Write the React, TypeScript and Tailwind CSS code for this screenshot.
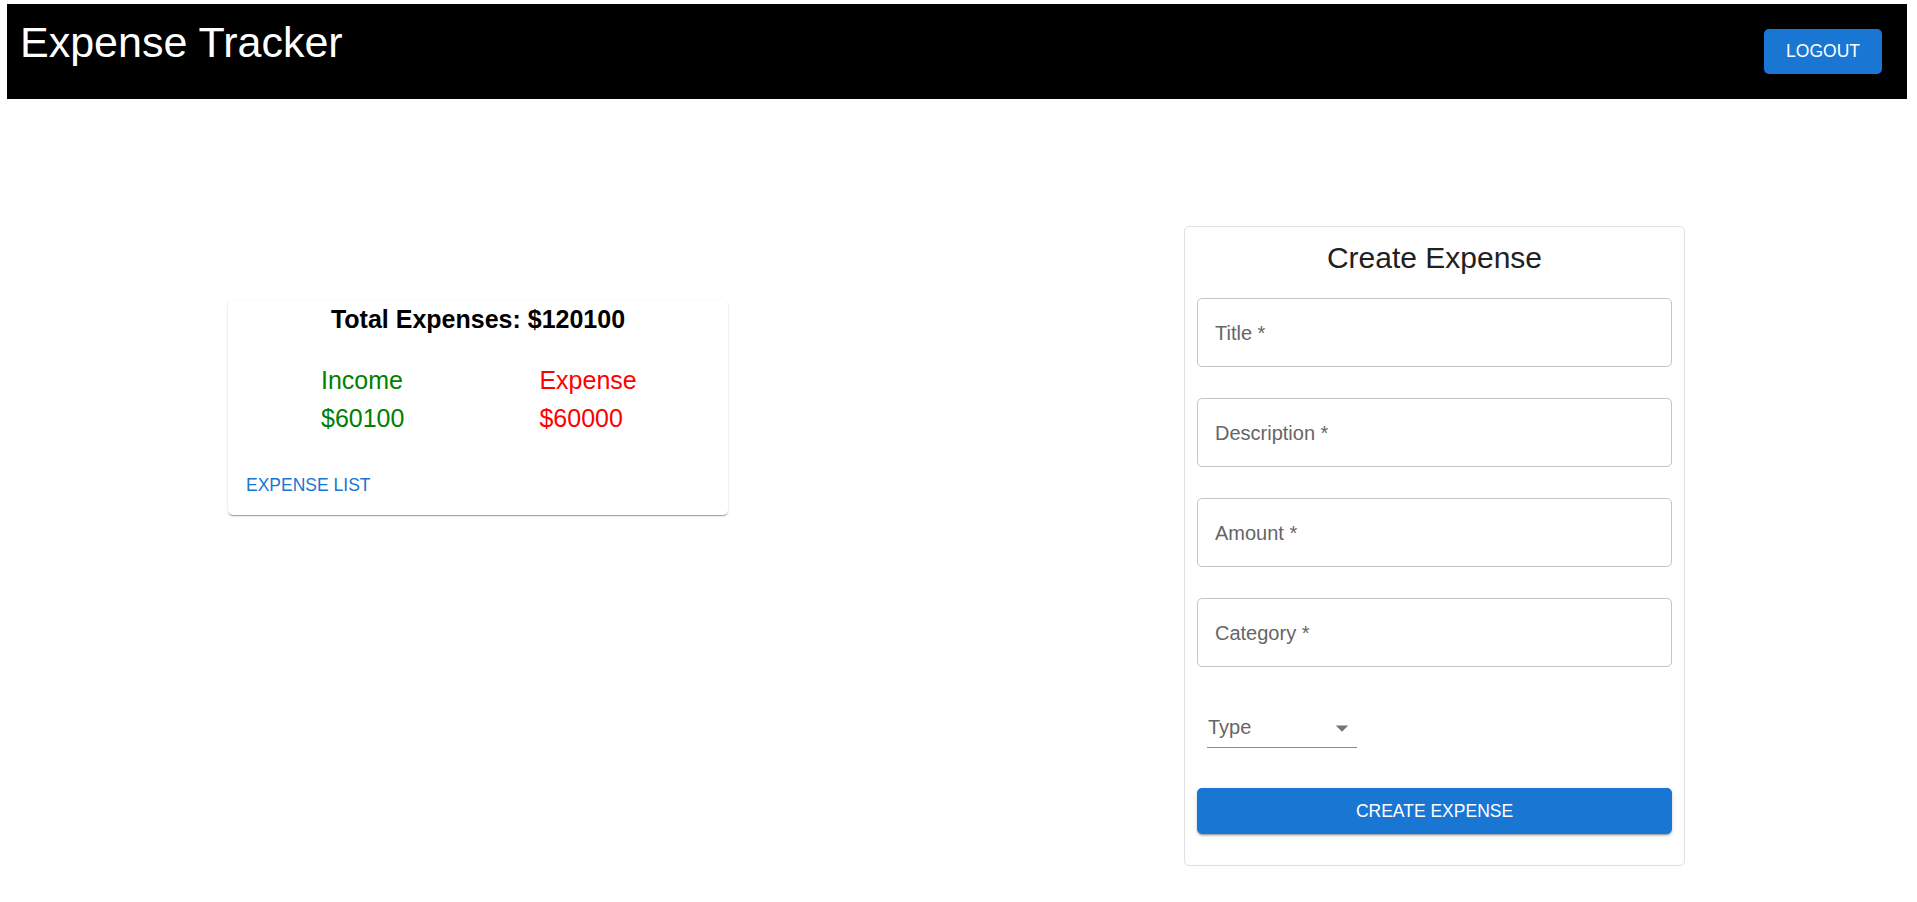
import { useState } from 'react';

const fields = ['Title', 'Description', 'Amount', 'Category'];

export default function App() {
  const [income] = useState(60100);
  const [expense] = useState(60000);

  return (
    <div className="min-h-screen bg-white font-['Liberation_Sans',Arial,sans-serif]">
      {/* header */}
      <header className="ml-[7px] mr-[10px] mt-[4px] h-[95px] bg-black flex items-start justify-between pl-[13px] pr-[25px]">
        <h1 className="pt-[17px] text-[43px] leading-none text-white">Expense Tracker</h1>
        <button className="mt-[25px] h-[45px] px-[22px] rounded-[5px] bg-[#1976d2] text-white text-[17.5px] uppercase">
          Logout
        </button>
      </header>

      <main className="flex items-start">
        {/* summary card */}
        <div className="ml-[228px] mt-[201px] w-[500px] rounded-[5px] bg-white shadow-[0px_2px_1px_-1px_rgba(0,0,0,0.2),0px_1px_1px_0px_rgba(0,0,0,0.14),0px_1px_3px_0px_rgba(0,0,0,0.12)]">
          <h2 className="text-center text-[25px] font-bold leading-[38px] text-black">
            Total Expenses: ${income + expense}
          </h2>
          <div className="mt-[24px] flex pl-[93px] gap-[135px] text-[25px] leading-[37.5px]">
            <div className="text-[#008000]">
              <p>Income</p>
              <p>${income}</p>
            </div>
            <div className="text-[#ff0000]">
              <p>Expense</p>
              <p>${expense}</p>
            </div>
          </div>
          <div className="mt-[33px] pb-[15px] pl-[18px]">
            <button className="text-[17.5px] leading-[30px] uppercase text-[#1976d2]">Expense List</button>
          </div>
        </div>

        {/* create form */}
        <form className="ml-[456px] mt-[127px] w-[501px] rounded-[5px] border border-[#e0e0e0] bg-white px-[12px] pt-[11px] pb-[31px]">
          <h2 className="text-center text-[30px] leading-[40px] text-[#212121]">Create Expense</h2>
          <div className="mt-[20px] flex flex-col gap-[31px]">
            {fields.map((f) => (
              <div
                key={f}
                className="h-[69px] rounded-[5px] border border-[#c4c4c4] flex items-center px-[17px] text-[20px] text-[#666666]"
              >
                {f} *
              </div>
            ))}
          </div>
          <div className="ml-[10px] mt-[29px] w-[150px] border-b border-[#8a8a8a] pt-[14px] pb-[4px] flex items-center justify-between">
            <span className="text-[20px] leading-[30px] text-[#666666] pl-[1px]">Type</span>
            <svg className="mt-[3px]" width="30" height="30" viewBox="0 0 24 24" fill="#757575">
              <path d="M7 10l5 5 5-5z" />
            </svg>
          </div>
          <button
            type="button"
            className="mt-[40px] w-full h-[46px] rounded-[5px] bg-[#1976d2] text-white text-[17.5px] uppercase shadow-[0px_3px_1px_-2px_rgba(0,0,0,0.2),0px_2px_2px_0px_rgba(0,0,0,0.14),0px_1px_5px_0px_rgba(0,0,0,0.12)]"
          >
            Create Expense
          </button>
        </form>
      </main>
    </div>
  );
}
